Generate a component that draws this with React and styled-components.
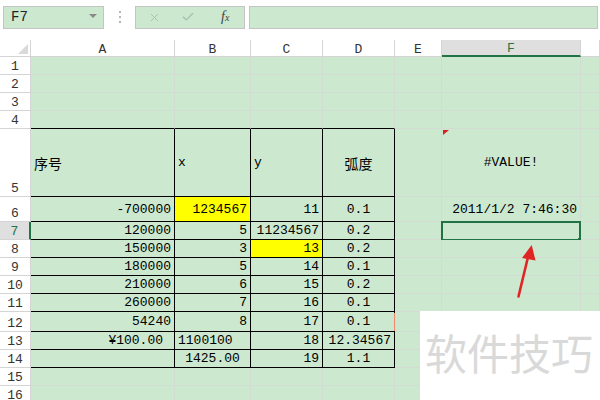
import React from 'react'
import styled, { createGlobalStyle } from 'styled-components'
import { X, Check } from 'lucide-react'

const GREEN = '#cce8cf'
const GRID = '#d3dcd3'
const XL = '#217346'

const GlobalStyle = createGlobalStyle`
  html, body {
    margin: 0;
    padding: 0;
    background: #fff;
    overflow: hidden;
  }
  body {
    font-family: "Liberation Mono", "Noto Sans CJK SC", monospace;
    font-size: 13px;
    color: #000;
  }
`

const Page = styled.div`
  position: relative;
  width: 600px;
  height: 400px;
  overflow: hidden;
`

const Toolbar = styled.div`
  display: flex;
  align-items: center;
  height: 40px;
  padding: 0 2px 6px 3px;
  box-sizing: border-box;
`

const Box = styled.div`
  height: 23px;
  box-sizing: border-box;
  border: 1px solid #c4c4c4;
  background: ${GREEN};
  display: flex;
  align-items: center;
`

const NameBox = styled(Box)`
  width: 101px;
  padding: 0 6px 0 7px;
  justify-content: space-between;
  font-size: 14px;
  color: #222;
`

const Caret = styled.span`
  width: 0;
  height: 0;
  border-left: 4px solid transparent;
  border-right: 4px solid transparent;
  border-top: 4px solid #8a8a8a;
  margin-bottom: 3px;
`

const Dots = styled.div`
  width: 31px;
  display: flex;
  flex-direction: column;
  align-items: center;
  gap: 3px;
  span {
    width: 2px;
    height: 2px;
    background: #b5b5b5;
  }
`

const FxBox = styled(Box)`
  width: 110px;
  padding: 0 0 0 12px;
  svg { flex: none; }
`

const IconSlot = styled.span`
  width: ${p => p.$w}px;
  display: flex;
  justify-content: center;
  color: #a8bca9;
`

const Fx = styled.span`
  font-family: "Liberation Serif", serif;
  font-style: italic;
  font-size: 14px;
  color: #444;
  margin-left: 5px;
  sub { font-size: 10px; vertical-align: baseline; }
`

const Formula = styled(Box)`
  flex: 1;
  margin-left: 4px;
`

const Sheet = styled.div`
  display: grid;
  grid-template-columns: 31px 144px 76px 72px 72px 47px 139px 1fr;
  grid-template-rows: 17px repeat(4, 18px) 68px 25px repeat(5, 18px) 20px repeat(4, 18px);
`

const Corner = styled.div`
  position: relative;
  background: #fff;
  border-right: 1px solid #d4d4d4;
  border-bottom: 1px solid #d4d4d4;
  &::after {
    content: '';
    position: absolute;
    right: 2px;
    bottom: 2px;
    border-left: 10px solid transparent;
    border-bottom: 10px solid #dadada;
  }
`

const ColHead = styled.div`
  display: flex;
  align-items: center;
  justify-content: center;
  box-sizing: border-box;
  background: ${p => (p.$active ? '#dfdfdf' : '#fff')};
  color: ${p => (p.$active ? XL : '#333')};
  border-right: 1px solid #d4d4d4;
  border-bottom: ${p => (p.$active ? `2px solid ${XL}` : '1px solid #d4d4d4')};
  font-size: 13px;
  padding-top: 2px;
`

const RowHead = styled.div`
  display: flex;
  align-items: flex-end;
  justify-content: center;
  box-sizing: border-box;
  background: ${p => (p.$active ? '#dfdfdf' : '#fff')};
  color: ${p => (p.$active ? XL : '#333')};
  border-right: ${p => (p.$active ? `2px solid ${XL}` : '1px solid #d4d4d4')};
  border-bottom: 1px solid #d4d4d4;
  font-size: 13px;
  line-height: 13px;
  padding-bottom: 1px;
`

const Cell = styled.div`
  position: relative;
  display: flex;
  align-items: center;
  justify-content: ${p => ({ l: 'flex-start', c: 'center', r: 'flex-end' }[p.$align] || 'flex-end')};
  box-sizing: border-box;
  padding: 0 ${p => p.$padR ?? 3}px 0 3px;
  white-space: nowrap;
  background: ${p => (p.$yellow ? '#ffff00' : GREEN)};
  border-right: 1px solid ${p => p.$right};
  border-bottom: 1px solid ${p => p.$bottom};
  font-family: ${p => (p.$cjk ? '"Noto Sans CJK SC", sans-serif' : '"Liberation Mono", monospace')};
  font-size: ${p => (p.$cjk ? 14 : 13)}px;
  color: #000;
`

const Selection = styled.div`
  position: absolute;
  left: -1px;
  top: -1px;
  right: -1px;
  bottom: -2px;
  border: 2px solid ${XL};
  pointer-events: none;
  &::after {
    content: '';
    position: absolute;
    right: -4px;
    bottom: -4px;
    width: 5px;
    height: 5px;
    background: ${XL};
  }
`

const CommentMark = styled.span`
  position: absolute;
  left: 1px;
  top: 1px;
  border-top: 5px solid #d42020;
  border-right: 6px solid transparent;
`

const EdgeMark = styled.span`
  position: absolute;
  right: -2px;
  top: 1px;
  width: 2px;
  height: 18px;
  background: #f2876a;
`

const Arrow = styled.svg`
  position: absolute;
  left: 0;
  top: 0;
  pointer-events: none;
`

const Watermark = styled.div`
  position: absolute;
  left: 420px;
  top: 311px;
  width: 180px;
  height: 89px;
  background: #fff;
  padding: 19px 0 0 5px;
  box-sizing: border-box;
  font-family: "Noto Sans CJK SC", sans-serif;
  font-size: 42px;
  line-height: 44px;
  color: #d9d9d9;
  white-space: nowrap;
`

const cols = ['A', 'B', 'C', 'D', 'E', 'F', 'G']

// cell contents for A..D, rows 5..14: [text, align, extra]
const table = {
  5: [['序号', 'l', { cjk: true }], ['x', 'l'], ['y', 'l'], ['弧度', 'c', { cjk: true }]],
  6: [['-700000'], ['1234567', 'r', { yellow: true }], ['11'], ['0.1', 'c']],
  7: [['120000'], ['5'], ['11234567'], ['0.2', 'c']],
  8: [['150000'], ['3'], ['13', 'r', { yellow: true }], ['0.2', 'c']],
  9: [['180000'], ['5'], ['14'], ['0.1', 'c']],
  10: [['210000'], ['6'], ['15'], ['0.2', 'c']],
  11: [['260000'], ['7'], ['16'], ['0.1', 'c']],
  12: [['54240'], ['8'], ['17'], ['0.1', 'c', { edge: true }]],
  13: [['¥100.00', 'r', { padR: 11 }], ['1100100', 'l'], ['18'], ['12.34567']],
  14: [[''], ['1425.00', 'c'], ['19'], ['1.1', 'c']],
}

const extraF = {
  5: ['#VALUE!', 'c'],
  6: ['2011/1/2 7:46:30', 'r'],
}

function renderRow(r) {
  const cells = [
    <RowHead key={`h${r}`} $active={r === 7}>{r}</RowHead>,
  ]
  cols.forEach((c, ci) => {
    let text = ''
    let align = 'r'
    let extra = {}
    if (ci < 4 && table[r]) {
      const def = table[r][ci]
      text = def[0]
      align = def[1] || 'r'
      extra = def[2] || {}
    }
    if (c === 'F' && extraF[r]) {
      text = extraF[r][0]
      align = extraF[r][1]
    }
    const inTable = ci < 4 && r >= 5 && r <= 14
    const right = inTable ? '#000' : GRID
    const bottom = ci < 4 && r >= 4 && r <= 14 ? '#000' : GRID
    cells.push(
      <Cell
        key={`${c}${r}`}
        $align={align}
        $right={right}
        $bottom={bottom}
        $cjk={extra.cjk}
        $yellow={extra.yellow}
        $padR={extra.padR}
      >
        {text}
        {c === 'F' && r === 7 && <Selection />}
        {c === 'F' && r === 5 && <CommentMark />}
        {extra.edge && <EdgeMark />}
      </Cell>
    )
  })
  return cells
}

function App() {
  const rows = Array.from({ length: 16 }, (_, i) => i + 1)
  return (
    <Page>
      <GlobalStyle />
      <Toolbar>
        <NameBox>
          <span>F7</span>
          <Caret />
        </NameBox>
        <Dots><span /><span /><span /></Dots>
        <FxBox>
          <IconSlot $w={12}><X size={13} strokeWidth={1.6} /></IconSlot>
          <IconSlot $w={56}><Check size={14} strokeWidth={2} /></IconSlot>
          <Fx>f<sub>x</sub></Fx>
        </FxBox>
        <Formula />
      </Toolbar>
      <Sheet>
        <Corner />
        {cols.map(c => (
          <ColHead key={c} $active={c === 'F'}>{c === 'G' ? '' : c}</ColHead>
        ))}
        {rows.map(renderRow)}
      </Sheet>
      <Arrow width="600" height="400" viewBox="0 0 600 400">
        <line x1="518.5" y1="296.5" x2="528" y2="257" stroke="#e02525" strokeWidth="2.6" strokeLinecap="round" />
        <polygon points="531.7,245 522,258 535.5,260.5" fill="#e02525" />
      </Arrow>
      <Watermark>软件技巧</Watermark>
    </Page>
  )
}

export default App
